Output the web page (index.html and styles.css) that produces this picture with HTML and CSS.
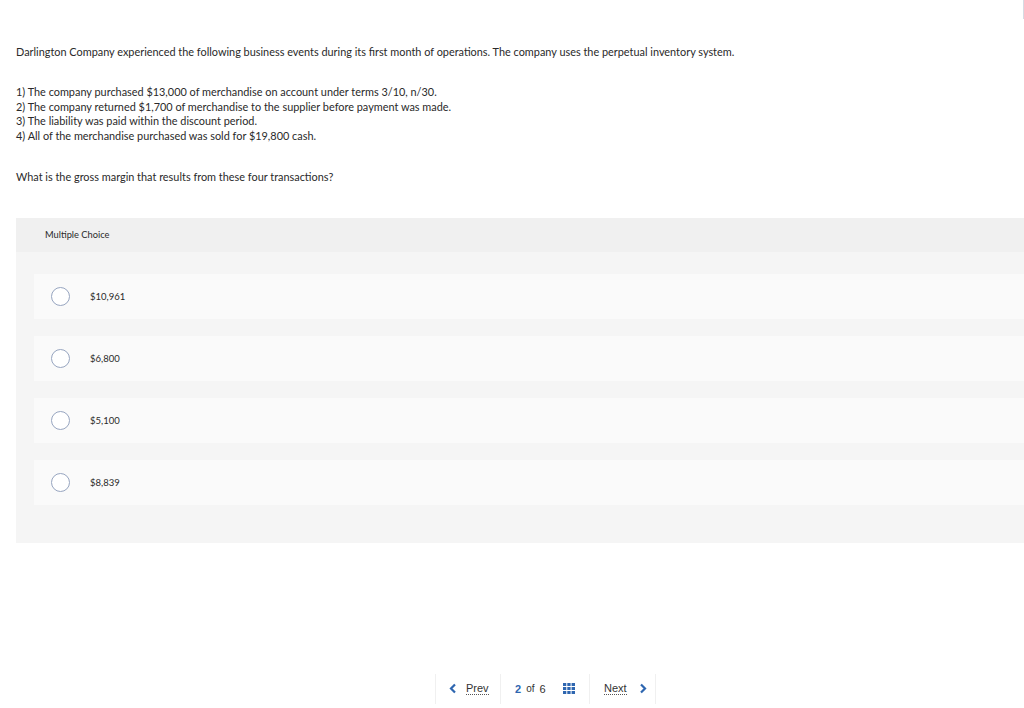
FILE: index.html
```html
<!DOCTYPE html>
<html lang="en">
<head>
    <meta charset="UTF-8">
    <meta name="viewport" content="width=device-width, initial-scale=1.0">
    <title>Question 2</title>
    <link rel="stylesheet" href="styles.css">
</head>
<body>
    <div class="edge-line"></div>
    <div class="question">
        <p class="intro">Darlington Company experienced the following business events during its first month of operations. The company uses the perpetual inventory system.</p>

        <ol class="events">
            <li>1) The company purchased $13,000 of merchandise on account under terms 3/10, n/30.</li>
            <li>2) The company returned $1,700 of merchandise to the supplier before payment was made.</li>
            <li>3) The liability was paid within the discount period.</li>
            <li>4) All of the merchandise purchased was sold for $19,800 cash.</li>
        </ol>

        <p class="ask">What is the gross margin that results from these four transactions?</p>
    </div>

    <div class="choices">
        <div class="choices-header">Multiple Choice</div>
        <div class="choices-list">
            <label class="choice">
                <span class="radio"></span>
                <span class="choice-text">$10,961</span>
            </label>
            <label class="choice">
                <span class="radio"></span>
                <span class="choice-text">$6,800</span>
            </label>
            <label class="choice">
                <span class="radio"></span>
                <span class="choice-text">$5,100</span>
            </label>
            <label class="choice">
                <span class="radio"></span>
                <span class="choice-text">$8,839</span>
            </label>
        </div>
    </div>

    <div class="nav">
        <a class="nav-btn prev" href="#">
            <svg width="8" height="11" viewBox="0 0 8 11"><polyline points="6,1.5 2,5.5 6,9.5" fill="none" stroke="#2e66b0" stroke-width="2.2"/></svg>
            <span class="nav-label">Prev</span>
        </a>
        <div class="nav-page">
            <span class="page-now">2</span>
            <span class="page-of">of</span>
            <span class="page-total">6</span>
            <svg class="grid-icon" width="12" height="11" viewBox="0 0 12 11">
                <rect x="0" y="0" width="3.3" height="3" fill="#2e66b0"/>
                <rect x="4.3" y="0" width="3.3" height="3" fill="#2e66b0"/>
                <rect x="8.6" y="0" width="3.4" height="3" fill="#2e66b0"/>
                <rect x="0" y="4" width="3.3" height="3" fill="#2e66b0"/>
                <rect x="4.3" y="4" width="3.3" height="3" fill="#2e66b0"/>
                <rect x="8.6" y="4" width="3.4" height="3" fill="#2e66b0"/>
                <rect x="0" y="8" width="3.3" height="3" fill="#2e66b0"/>
                <rect x="4.3" y="8" width="3.3" height="3" fill="#2e66b0"/>
                <rect x="8.6" y="8" width="3.4" height="3" fill="#2e66b0"/>
            </svg>
        </div>
        <a class="nav-btn next" href="#">
            <span class="nav-label">Next</span>
            <svg width="8" height="11" viewBox="0 0 8 11"><polyline points="2,1.5 6,5.5 2,9.5" fill="none" stroke="#2e66b0" stroke-width="2.2"/></svg>
        </a>
    </div>
</body>
</html>
```

FILE: styles.css
```css
body {
    font-family: Lato, "Liberation Sans", sans-serif;
    margin: 0;
    padding: 0;
    color: #2a2a2a;
    background: #fff;
    height: 708px;
    overflow: hidden;
    position: relative;
}

.edge-line {
    position: absolute;
    top: 0;
    right: 0;
    width: 1px;
    height: 19px;
    background: #d6dbe3;
}

.question {
    padding: 45px 16px 0 16px;
    font-size: 10.9px;
}

.intro {
    margin: 0;
    line-height: 14px;
}

.events {
    list-style: none;
    margin: 26px 0 0 0;
    padding: 0;
    line-height: 14.7px;
}

.ask {
    margin: 26px 0 0 0;
    line-height: 14px;
}

.choices {
    margin: 34px 0 0 16px;
    background-color: #f5f5f5;
}

.choices-header {
    height: 34px;
    display: flex;
    align-items: center;
    padding-left: 29px;
    font-size: 9.3px;
    background-color: #f0f0f0;
}

.choices-list {
    display: flex;
    flex-direction: column;
    gap: 17px;
    padding: 22px 0 38px 18px;
}

.choice {
    height: 45px;
    display: flex;
    align-items: center;
    background-color: #fafafa;
    cursor: pointer;
}

.radio {
    width: 17px;
    height: 17px;
    border: 1px solid #97a5c0;
    border-radius: 50%;
    margin-left: 17px;
    background: #fff;
}

.choice-text {
    margin-left: 20px;
    font-size: 9.5px;
}

.nav {
    display: flex;
    margin: 131px 0 0 435px;
    height: 30px;
    font-family: "Liberation Sans", Arial, sans-serif;
    font-size: 11px;
}

.nav-btn,
.nav-page {
    display: flex;
    align-items: center;
    border-left: 1px solid #f0f0f0;
    color: #333;
    text-decoration: none;
}

.prev {
    width: 65px;
    padding-left: 13px;
    gap: 9px;
    box-sizing: border-box;
}

.nav-page {
    width: 89px;
    padding-left: 14px;
    box-sizing: border-box;
}

.next {
    width: 67px;
    padding-left: 14px;
    gap: 12px;
    box-sizing: border-box;
    border-right: 1px solid #f0f0f0;
}

.nav-label {
    border-bottom: 1px dotted #555;
    line-height: 11px;
}

.page-now {
    color: #2e66b0;
    font-weight: bold;
}

.page-of {
    margin-left: 5px;
    font-size: 10px;
}

.page-total {
    margin-left: 5px;
}

.grid-icon {
    margin-left: 17px;
}
```
